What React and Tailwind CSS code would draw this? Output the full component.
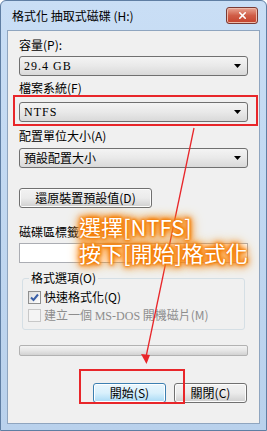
import { X } from "lucide-react";

const font = "font-['Noto_Sans_CJK_TC','Liberation_Sans',sans-serif]";

function Combo({ value, mono }) {
  return (
    <div className="flex h-[20px] items-center justify-between rounded-[3px] border border-[#707070] bg-gradient-to-b from-[#f4f4f4] via-[#e9e9e9] to-[#d9d9d9] pl-[4px] pr-[6px]">
      <span className={`text-[12px] leading-none text-black ${mono ? "font-['Liberation_Serif',serif] tracking-[1px]" : ""}`}>{value}</span>
      <svg width="7" height="4" viewBox="0 0 7 4">
        <path d="M0 0h7L3.5 4z" fill="#000" />
      </svg>
    </div>
  );
}

function Button({ children, className = "", primary }) {
  return (
    <div
      className={`flex h-[20px] items-center justify-center rounded-[3px] border text-[12px] leading-none text-black ${
        primary
          ? "border-[#3c7fb1] bg-gradient-to-b from-[#eaf6fd] via-[#d9f0fc] to-[#a7d9f5] shadow-[inset_0_0_0_1px_#fff]"
          : "border-[#707070] bg-gradient-to-b from-[#f2f2f2] via-[#ebebeb] to-[#cfcfcf] shadow-[inset_0_0_0_1px_#fcfcfc]"
      } ${className}`}
    >
      {children}
    </div>
  );
}

export default function App() {
  return (
    <div className={`relative h-[431px] w-[267px] overflow-hidden rounded-t-[6px] border border-[#5f7ea3] bg-gradient-to-b from-[#c9def5] to-[#b9d1ec] ${font}`}>
      {/* title bar */}
      <div className="flex h-[29px] items-center justify-between pl-[11px] pr-[8px]">
        <span className="text-[12px] leading-none text-black">格式化 抽取式磁碟 (H:)</span>
        <div className="flex h-[17px] w-[32px] items-center justify-center rounded-[3px] border border-[#7a3a34] bg-gradient-to-b from-[#e8a493] via-[#d05d47] to-[#c5412b] shadow-[inset_0_0_0_1px_#eebbaa]">
          <X size={11} strokeWidth={3.5} color="#fff" />
        </div>
      </div>

      {/* client area */}
      <div className="mx-[6px] flex h-[394px] flex-col border border-[#8fa5bf] bg-[#f0f0f0] px-[11px] text-[12px] text-black">
        <div className="mt-[6px] h-[16px] leading-[16px]">容量(P):</div>
        <div className="mt-[3px]">
          <Combo value="29.4 GB" mono />
        </div>
        <div className="mt-[4px] h-[16px] leading-[16px]">檔案系統(F)</div>
        <div className="mt-[6px]">
          <Combo value="NTFS" mono />
        </div>
        <div className="mt-[6px] h-[16px] leading-[16px]">配置單位大小(A)</div>
        <div className="mt-[4px]">
          <Combo value="預設配置大小" />
        </div>
        <Button className="mt-[20px] w-[133px]">還原裝置預設值(D)</Button>

        <div className="mt-[16px] h-[16px] leading-[16px]">磁碟區標籤</div>
        <div className="mt-[3px] h-[20px] border border-[#abadb3] bg-white" />

        {/* group box */}
        <div className="relative mx-[3px] mt-[15px] h-[52px] rounded-[3px] border border-[#d5dfe5] px-[5px] pt-[10px]">
          <span className="absolute left-[6px] top-[-9px] bg-[#f0f0f0] px-[2px] leading-[16px]">格式選項(O)</span>
          <div className="flex h-[16px] items-center gap-[3px]">
            <div className="flex h-[13px] w-[13px] items-center justify-center border border-[#8f8f8f] bg-gradient-to-br from-[#dcdcdc] to-[#fff]">
              <svg width="9" height="9" viewBox="0 0 9 9">
                <path d="M1 4.5l2.5 2.5L8 1.5" fill="none" stroke="#3a5fa7" strokeWidth="2" />
              </svg>
            </div>
            <span>快速格式化(Q)</span>
          </div>
          <div className="mt-[2px] flex h-[16px] items-center gap-[3px] text-[#8d8d8d]">
            <div className="h-[13px] w-[13px] border border-[#c8c8c8] bg-[#f4f4f4]" />
            <span>
              建立一個 <span className="font-['Liberation_Serif',serif]">MS-DOS</span> 開機磁片(M)
            </span>
          </div>
        </div>

        {/* progress bar */}
        <div className="mt-[15px] h-[11px] rounded-[2px] border border-[#b2b2b2] bg-gradient-to-b from-[#f3f3f3] via-[#e6e6e6] to-[#d2d2d2]" />

        <div className="mt-[27px] flex justify-end gap-[8px] pr-[1px]">
          <Button primary className="w-[73px]">開始(S)</Button>
          <Button className="w-[73px]">關閉(C)</Button>
        </div>
      </div>

      {/* annotations */}
      <div className="pointer-events-none absolute left-[12px] top-[94px] h-[31px] w-[245px] border-2 border-[#e8262a]" />
      <div className="pointer-events-none absolute left-[78px] top-[368px] h-[35px] w-[106px] border-2 border-[#e8262a]" />
      <svg className="pointer-events-none absolute left-0 top-0" width="267" height="431">
        <line x1="193" y1="127" x2="145" y2="356" stroke="#e8262a" strokeWidth="1.3" />
        <path d="M140 353l5.5 10 3.5-9z" fill="#e8262a" />
      </svg>
      <div className="pointer-events-none absolute left-[78px] top-[212px] text-[22px] font-normal leading-[26px] text-white [text-shadow:0_0_2px_#f47a00,0_0_3px_#f47a00,0_0_4px_#f47a00,0_0_5px_#f47a00,0_0_6px_#f68a10,0_0_8px_#f68a10,0_0_10px_#f79a30,0_0_12px_#f79a30,0_0_14px_#f8a848]">
        <div>選擇[NTFS]</div>
        <div>按下[開始]格式化</div>
      </div>
    </div>
  );
}
